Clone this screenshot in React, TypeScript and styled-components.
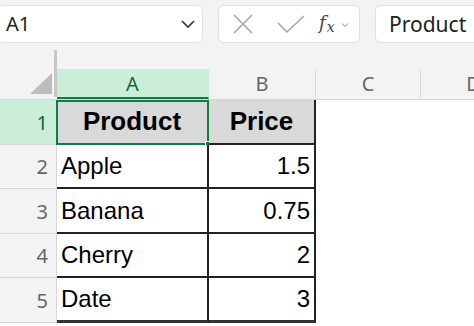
import React from "react";
import styled, { createGlobalStyle } from "styled-components";

const GlobalStyle = createGlobalStyle`
  html, body {
    margin: 0;
    padding: 0;
    background: #f3f3f3;
    overflow: hidden;
  }
  * { box-sizing: border-box; }
`;

const rows = [
  { n: 1, a: "Product", b: "Price", head: true },
  { n: 2, a: "Apple", b: "1.5" },
  { n: 3, a: "Banana", b: "0.75" },
  { n: 4, a: "Cherry", b: "2" },
  { n: 5, a: "Date", b: "3" },
];

const columns = ["A", "B", "C", "D"];

function App() {
  return (
    <Page>
      <GlobalStyle />
      <TopBar>
        <NameBox>
          <NameText>A1</NameText>
          <svg width="16" height="10" viewBox="0 0 16 10">
            <path d="M2 2 L8 8 L14 2" fill="none" stroke="#333" strokeWidth="1.6" />
          </svg>
        </NameBox>
        <FormulaButtons>
          <svg width="22" height="20" viewBox="0 0 22 20">
            <path d="M2 1 L20 19 M20 1 L2 19" stroke="#a6a6a6" strokeWidth="1.6" fill="none" />
          </svg>
          <svg width="28" height="20" viewBox="0 0 28 20">
            <path d="M1 9 L10 18 L27 2" stroke="#a6a6a6" strokeWidth="1.6" fill="none" />
          </svg>
          <Fx>
            f<sub>x</sub>
          </Fx>
          <svg width="8" height="6" viewBox="0 0 8 6">
            <path d="M1 1.5 L4 4.5 L7 1.5" stroke="#888" strokeWidth="1" fill="none" />
          </svg>
        </FormulaButtons>
        <FormulaInput>Product</FormulaInput>
      </TopBar>

      <Sheet>
        <Corner>
          <svg width="24" height="22" viewBox="0 0 24 22">
            <polygon points="23,0 23,21 1,21" fill="#bdbdbd" />
          </svg>
        </Corner>
        {columns.map((c, i) => (
          <ColHead key={c}>
            <ColFill $active={i === 0} $last={i === columns.length - 1}>{c}</ColFill>
          </ColHead>
        ))}

        {rows.map((r) => (
          <React.Fragment key={r.n}>
            <RowHead $active={r.n === 1}>{r.n}</RowHead>
            <Cell $head={r.head} $col="a" $last={r.n === 5}>
              {r.a}
              {r.n === 1 && (
                <>
                  <Selection />
                  <Handle />
                </>
              )}
            </Cell>
            <Cell $head={r.head} $col="b" $last={r.n === 5}>{r.b}</Cell>
            <Empty />
            <Empty />
          </React.Fragment>
        ))}
      </Sheet>
    </Page>
  );
}

const Page = styled.div`
  width: 474px;
  height: 326px;
  background: #f3f3f3;
  overflow: hidden;
  display: flex;
  flex-direction: column;
`;

const TopBar = styled.div`
  height: 50px;
  display: flex;
  align-items: flex-start;
  padding-top: 5px;
  margin-left: -3px;
  gap: 15px;
`;

const NameBox = styled.div`
  width: 206px;
  height: 38px;
  background: #fff;
  border: 1px solid #e0e0e0;
  border-radius: 6px;
  display: flex;
  align-items: center;
  justify-content: space-between;
  padding: 0 6px 0 8px;
  flex-shrink: 0;
`;

const NameText = styled.span`
  font-family: "Noto Sans", "Open Sans", sans-serif;
  font-size: 20px;
  color: #222;
  margin-top: -1px;
`;

const FormulaButtons = styled.div`
  width: 142px;
  height: 38px;
  background: #fff;
  border: 1px solid #e0e0e0;
  border-radius: 6px;
  display: flex;
  align-items: center;
  padding: 0 4px 0 13px;
  flex-shrink: 0;

  & > svg:nth-child(2) { margin-left: 23px; }
  & > svg:last-child { margin-left: 6px; margin-top: 2px; }
`;

const Fx = styled.span`
  font-family: "DejaVu Serif", "Liberation Serif", serif;
  font-style: italic;
  font-size: 18px;
  color: #444;
  margin-left: 14px;
  margin-top: -2px;

  sub {
    font-size: 14px;
    vertical-align: -3px;
    margin-left: 1px;
  }
`;

const FormulaInput = styled.div`
  flex: 1;
  min-width: 160px;
  height: 38px;
  background: #fff;
  border: 1px solid #e0e0e0;
  border-radius: 6px;
  display: flex;
  align-items: center;
  padding-left: 13px;
  font-family: "Noto Sans", "Open Sans", sans-serif;
  font-size: 21px;
  color: #222;
`;

const Sheet = styled.div`
  display: grid;
  grid-template-columns: 57px 152px 107px 105px 106px;
  grid-template-rows: 50px 45px 44px 45px 44px 45px 1fr;
  flex: 1;
  background: #fff;
`;

const Corner = styled.div`
  background: #f3f3f3;
  border-bottom: 1px solid #d6d6d6;
  display: flex;
  align-items: flex-end;
  justify-content: flex-end;
  padding: 0 4px 4px 0;
  position: relative;

  &::after {
    content: "";
    position: absolute;
    right: 0;
    top: 0;
    bottom: 2px;
    width: 3px;
    background: #c8c8c8;
  }
`;

const ColHead = styled.div`
  background: #f3f3f3;
  border-bottom: 1px solid #d6d6d6;
  display: flex;
  align-items: flex-end;
`;

const ColFill = styled.div<{ $active?: boolean; $last?: boolean }>`
  flex: 1;
  height: 30px;
  display: flex;
  align-items: center;
  justify-content: center;
  font-family: "Noto Sans", "Open Sans", sans-serif;
  font-size: 20px;
  color: ${(p) => (p.$active ? "#0e6b38" : "#666")};
  background: ${(p) => (p.$active ? "#caeed9" : "transparent")};
  border-bottom: 2px solid ${(p) => (p.$active ? "#107c41" : "transparent")};
  border-right: 1px solid ${(p) => (p.$active || p.$last ? "transparent" : "#dadada")};
`;

const RowHead = styled.div<{ $active?: boolean }>`
  background: ${(p) => (p.$active ? "#caeed9" : "#f3f3f3")};
  color: ${(p) => (p.$active ? "#0e6b38" : "#666")};
  border-bottom: 1px solid #d6d6d6;
  border-right: 1px solid #d6d6d6;
  display: flex;
  align-items: center;
  justify-content: flex-end;
  padding-right: 8px;
  font-family: "Noto Sans", "Open Sans", sans-serif;
  font-size: 20px;
`;

const Cell = styled.div<{ $head?: boolean; $col: "a" | "b"; $last?: boolean }>`
  position: relative;
  background: ${(p) => (p.$head ? "#d9d9d9" : "#fff")};
  border-bottom: ${(p) => (p.$last ? "3px solid #333" : "2px solid #222")};
  border-right: 2px solid #222;
  display: flex;
  align-items: center;
  justify-content: ${(p) => (p.$head ? "center" : p.$col === "a" ? "flex-start" : "flex-end")};
  padding: 0 4px;
  font-family: "Liberation Sans", Arial, sans-serif;
  font-size: ${(p) => (p.$head ? "26px" : "24px")};
  font-weight: ${(p) => (p.$head ? 700 : 400)};
  color: #000;
`;

const Selection = styled.div`
  position: absolute;
  left: -1px;
  top: 0;
  right: -2px;
  bottom: -2px;
  border: 2px solid #107c41;
  pointer-events: none;
`;

const Handle = styled.div`
  position: absolute;
  right: -6px;
  bottom: -6px;
  width: 8px;
  height: 8px;
  background: #107c41;
  border: 1px solid #fff;
`;

const Empty = styled.div`
  background: #fff;
`;

export default App;
